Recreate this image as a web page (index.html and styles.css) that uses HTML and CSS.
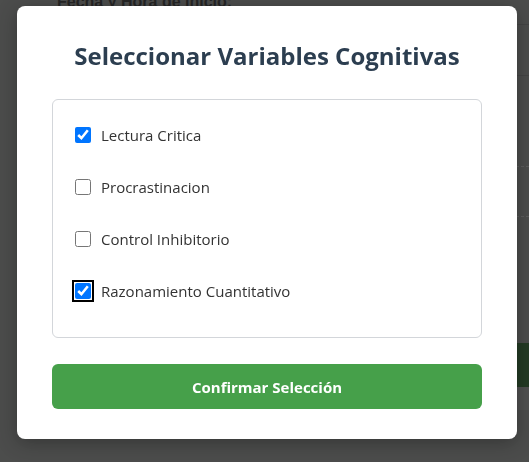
FILE: index.html
```html
<!DOCTYPE html>
<html lang="es">
<head>
<meta charset="utf-8">
<link rel="stylesheet" href="styles.css">
</head>
<body>
<div class="page">
  <div class="page-label">Fecha y Hora de inicio:</div>
  <div class="page-row line1"></div>
  <div class="page-row line2"></div>
  <div class="page-row dash1"></div>
  <div class="page-row dash2"></div>
  <div class="page-btn"></div>
  <div class="page-strip"></div>
</div>
<div class="overlay">
  <div class="modal">
    <h2 class="modal-title">Seleccionar Variables Cognitivas</h2>
    <div class="options">
      <label class="option"><input type="checkbox" checked><span>Lectura Critica</span></label>
      <label class="option"><input type="checkbox"><span>Procrastinacion</span></label>
      <label class="option"><input type="checkbox"><span>Control Inhibitorio</span></label>
      <label class="option"><input type="checkbox" class="focused" checked><span>Razonamiento Cuantitativo</span></label>
    </div>
    <button class="confirm">Confirmar Selección</button>
  </div>
</div>
</body>
</html>
```
FILE: styles.css
```css
html, body {
  margin: 0;
  padding: 0;
  height: 100%;
}
body {
  background: #525352;
  font-family: "Open Sans", "Noto Sans", sans-serif;
  overflow: hidden;
}
.page {
  display: flex;
  flex-direction: column;
  height: 462px;
}
.page-label {
  margin: -6px 0 0 57px;
  font-family: "Liberation Sans", sans-serif;
  font-weight: bold;
  font-size: 16px;
  line-height: 16px;
  color: #1e1e1e;
  height: 16px;
}
.page-row {
  margin-left: 400px;
  height: 0;
}
.line1 { margin-top: 14px; border-top: 1px solid #474848; }
.line2 { margin-top: 50px; border-top: 1px solid #474848; }
.dash1 { margin-top: 90px; border-top: 1px dashed #6a6a6a; }
.dash2 { margin-top: 49px; border-top: 1px dashed #6a6a6a; }
.page-btn {
  margin-top: 126px;
  margin-left: 400px;
  height: 44px;
  background: #1c3b1d;
}
.page-strip {
  margin-left: 400px;
  height: 23px;
  background: #575857;
}
.overlay {
  position: fixed;
  inset: 0;
  background: rgba(60, 60, 60, 0.25);
}
.modal {
  position: absolute;
  left: 17px;
  top: 6px;
  width: 500px;
  box-sizing: border-box;
  padding: 26px 35px 30px;
  background: #fff;
  border-radius: 8px;
  box-shadow: 0 4px 20px rgba(0, 0, 0, 0.3);
}
.modal-title {
  margin: 0 0 19px;
  text-align: center;
  font-size: 24px;
  font-weight: 700;
  color: #2c3e50;
  line-height: 48px;
}
.options {
  border: 1px solid #d3d6da;
  border-radius: 6px;
  padding: 9px 22px 0;
  display: flex;
  flex-direction: column;
  height: 239px;
  box-sizing: border-box;
}
.option {
  display: flex;
  align-items: center;
  gap: 10px;
  height: 52px;
  flex: none;
  font-size: 15px;
  color: #333;
}
.option input {
  margin: 0;
  width: 16px;
  height: 16px;
  accent-color: #0075ff;
}
.option input.focused {
  outline: 2px solid #000;
  outline-offset: 1px;
  border-radius: 2px;
}
.confirm {
  display: block;
  width: 100%;
  margin-top: 26px;
  height: 45px;
  border: none;
  border-radius: 6px;
  background: #46a04a;
  color: #fff;
  font-family: "Open Sans", "Noto Sans", sans-serif;
  font-size: 15px;
  font-weight: 700;
}
```
